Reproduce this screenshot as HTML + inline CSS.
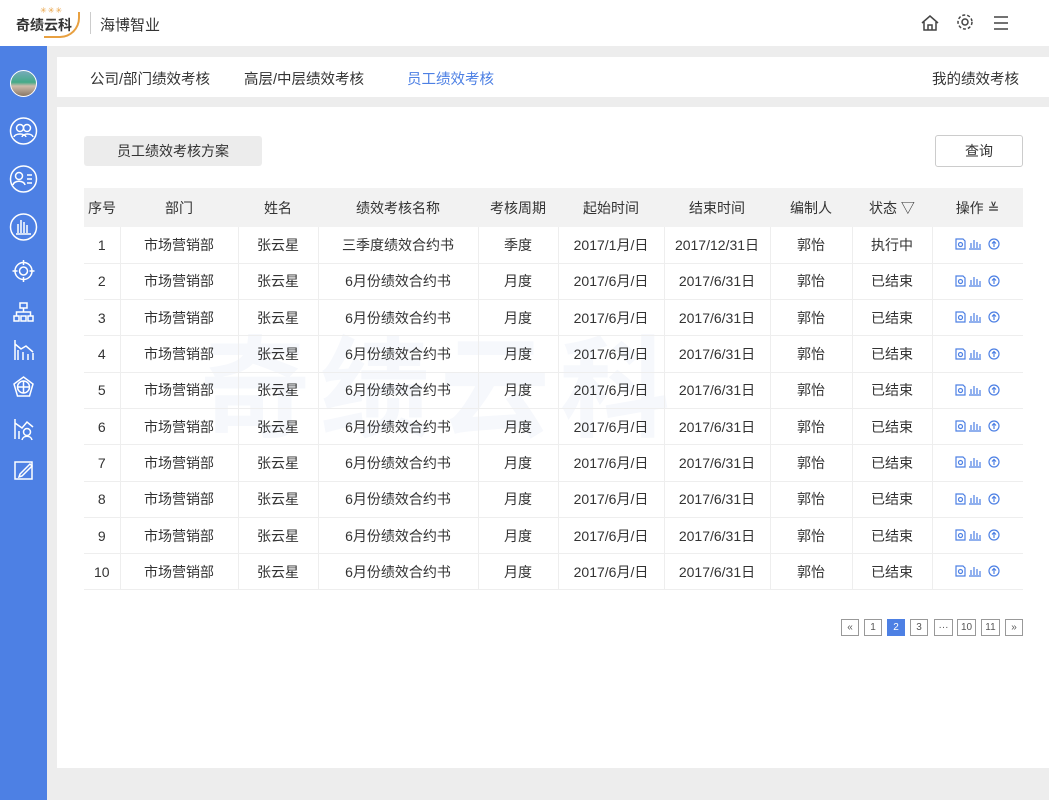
<!DOCTYPE html><html><head><meta charset="utf-8"><style>
*{margin:0;padding:0;box-sizing:border-box}
body{width:1049px;height:800px;background:#ededed;font-family:"Liberation Sans","Noto Sans CJK SC",sans-serif;color:#333;position:relative;overflow:hidden;font-size:14px}
.hd{position:absolute;left:0;top:0;width:1049px;height:46px;background:#fff}
.sb{position:absolute;left:0;top:46px;width:47px;height:754px;background:#4d80e4}
.tabs{position:absolute;left:57px;top:57px;width:992px;height:40px;background:#fff;font-size:14.5px}
.tabs span{position:absolute;top:11px}
.card{position:absolute;left:57px;top:107px;width:992px;height:661px;background:#fff}
table{position:absolute;left:84px;top:188px;width:939px;border-collapse:collapse;font-size:14px}
td,th{text-align:center;font-weight:normal;height:36.3px;border-bottom:1px solid #eee;border-left:1px solid #eee}
th{background:#f2f2f2;height:39px;border:none}
td:first-child{border-left:none}
td.ops{padding-top:3px}
.pg{position:absolute;top:619px;height:17px;border:1px solid #999;font-size:10px;color:#555;text-align:center;line-height:15px}
</style></head><body>
<svg width="0" height="0" style="position:absolute"><defs><g id="op" fill="none" stroke="#4d80e4" stroke-width="1.2"><path d="M1 1H8L10 3V11H1Z"/><circle cx="5.5" cy="6.5" r="2"/><path d="M14 11H26M16 10V5M19 10V2M22 10V4M25 10V6"/><circle cx="39" cy="6" r="5"/><path d="M39 9V3.5M37 5.5L39 3.5L41 5.5"/></g></defs></svg>
<div class="hd">
<div style="position:absolute;left:16px;top:15px;font-size:14px;font-weight:bold;color:#333">奇绩云科</div>
<div style="position:absolute;left:44px;top:12px;width:36px;height:26px;border:2px solid #e8a040;border-left:none;border-top:none;border-radius:0 0 20px 0"></div>
<div style="position:absolute;left:40px;top:6px;font-size:8px;color:#e8a040;letter-spacing:1px">✳✳✳</div>
<div style="position:absolute;left:90px;top:12px;width:1px;height:22px;background:#ccc"></div>
<div style="position:absolute;left:100px;top:14px;font-size:15px">海博智业</div>
<svg style="position:absolute;left:920px;top:14px" width="100" height="18" fill="none" stroke="#444" stroke-width="1.5"><path d="M2 9L10 2L18 9M4 8V16H16V8M8 16V11H12V16"/><circle cx="45" cy="8" r="3"/><circle cx="45" cy="8" r="7" stroke-dasharray="3 2"/><path d="M74 3H88M74 9H88M74 15H88"/></svg>
</div>
<div class="sb">
<div style="position:absolute;left:10px;top:24px;width:27px;height:27px;border:1.5px solid #fff;border-radius:50%;background:linear-gradient(#7ab 0,#4a8 45%,#cba 60%,#876 100%)"></div>
<svg style="position:absolute;left:0;top:60px" width="47" height="380" fill="none" stroke="#fff" stroke-width="1.5">
<circle cx="23.5" cy="25" r="13"/><circle cx="20" cy="22" r="3.5"/><circle cx="27" cy="22" r="3.5"/><path d="M14 31C15 27 25 27 26 31M22 31C23 27 32 27 33 31"/>
<circle cx="23.5" cy="73" r="13"/><circle cx="19" cy="70" r="3.5"/><path d="M13 79C14 74 24 74 25 79M27 69H32M27 73H32M27 77H32"/>
<circle cx="23.5" cy="121" r="13"/><path d="M16 128H31M18 127V118M21 127V114M24 127V116M27 127V119"/>
<circle cx="23.5" cy="165" r="8.5"/><circle cx="23.5" cy="165" r="4"/><path d="M23.5 154V159M23.5 171V176M12.5 165H17.5M29.5 165H34.5"/>
<rect x="20" y="197" width="7" height="5"/><rect x="14" y="210" width="5" height="5"/><rect x="21" y="210" width="5" height="5"/><rect x="28" y="210" width="5" height="5"/><path d="M23.5 202V206M16.5 210V206H30.5V210"/>
<path d="M15 234V254M18 254V244M23 254V246M28 254V248M33 254V247M15 238L21 243L26 240L33 246"/>
<path d="M23.5 271L33 278L29.5 290H17.5L14 278Z"/><circle cx="23.5" cy="281" r="6"/><path d="M23.5 275V287M18 281H29"/>
<path d="M15 313V333M19 333V325M15 317L22 322L27 316L33 321"/><circle cx="27" cy="326" r="3.5"/><path d="M22 334C23 329 31 329 32 334"/>
<rect x="15" y="356" width="17" height="17"/><path d="M20 368L30 358L32 360L22 370L19 371Z"/>
</svg>
</div>
<div class="tabs"><span style="left:33px">公司/部门绩效考核</span><span style="left:187px">高层/中层绩效考核</span><span style="left:350px;color:#4d80e4">员工绩效考核</span><span style="left:875px">我的绩效考核</span></div>
<div class="card"></div>
<div style="position:absolute;left:84px;top:136px;width:178px;height:30px;background:#ececec;border-radius:3px;text-align:center;line-height:30px;font-size:14px">员工绩效考核方案</div>
<div style="position:absolute;left:935px;top:135px;width:88px;height:32px;border:1px solid #ccc;border-radius:3px;text-align:center;line-height:30px">查询</div>
<div style="position:absolute;left:200px;top:300px;font-size:110px;color:#f6f8fc;font-weight:bold;letter-spacing:10px">奇绩云科</div>
<table>
<tr><th style="width:36px">序号</th><th style="width:118px">部门</th><th style="width:80px">姓名</th><th style="width:160px">绩效考核名称</th><th style="width:80px">考核周期</th><th style="width:106px">起始时间</th><th style="width:106px">结束时间</th><th style="width:82px">编制人</th><th style="width:80px">状态 ▽</th><th>操作 ≚</th></tr>
<tr><td>1</td><td>市场营销部</td><td>张云星</td><td>三季度绩效合约书</td><td>季度</td><td>2017/1月/日</td><td>2017/12/31日</td><td>郭怡</td><td>执行中</td><td class="ops"><svg width="46" height="13"><use href="#op"/></svg></td></tr>
<tr><td>2</td><td>市场营销部</td><td>张云星</td><td>6月份绩效合约书</td><td>月度</td><td>2017/6月/日</td><td>2017/6/31日</td><td>郭怡</td><td>已结束</td><td class="ops"><svg width="46" height="13"><use href="#op"/></svg></td></tr>
<tr><td>3</td><td>市场营销部</td><td>张云星</td><td>6月份绩效合约书</td><td>月度</td><td>2017/6月/日</td><td>2017/6/31日</td><td>郭怡</td><td>已结束</td><td class="ops"><svg width="46" height="13"><use href="#op"/></svg></td></tr>
<tr><td>4</td><td>市场营销部</td><td>张云星</td><td>6月份绩效合约书</td><td>月度</td><td>2017/6月/日</td><td>2017/6/31日</td><td>郭怡</td><td>已结束</td><td class="ops"><svg width="46" height="13"><use href="#op"/></svg></td></tr>
<tr><td>5</td><td>市场营销部</td><td>张云星</td><td>6月份绩效合约书</td><td>月度</td><td>2017/6月/日</td><td>2017/6/31日</td><td>郭怡</td><td>已结束</td><td class="ops"><svg width="46" height="13"><use href="#op"/></svg></td></tr>
<tr><td>6</td><td>市场营销部</td><td>张云星</td><td>6月份绩效合约书</td><td>月度</td><td>2017/6月/日</td><td>2017/6/31日</td><td>郭怡</td><td>已结束</td><td class="ops"><svg width="46" height="13"><use href="#op"/></svg></td></tr>
<tr><td>7</td><td>市场营销部</td><td>张云星</td><td>6月份绩效合约书</td><td>月度</td><td>2017/6月/日</td><td>2017/6/31日</td><td>郭怡</td><td>已结束</td><td class="ops"><svg width="46" height="13"><use href="#op"/></svg></td></tr>
<tr><td>8</td><td>市场营销部</td><td>张云星</td><td>6月份绩效合约书</td><td>月度</td><td>2017/6月/日</td><td>2017/6/31日</td><td>郭怡</td><td>已结束</td><td class="ops"><svg width="46" height="13"><use href="#op"/></svg></td></tr>
<tr><td>9</td><td>市场营销部</td><td>张云星</td><td>6月份绩效合约书</td><td>月度</td><td>2017/6月/日</td><td>2017/6/31日</td><td>郭怡</td><td>已结束</td><td class="ops"><svg width="46" height="13"><use href="#op"/></svg></td></tr>
<tr><td>10</td><td>市场营销部</td><td>张云星</td><td>6月份绩效合约书</td><td>月度</td><td>2017/6月/日</td><td>2017/6/31日</td><td>郭怡</td><td>已结束</td><td class="ops"><svg width="46" height="13"><use href="#op"/></svg></td></tr>
</table>
<div class="pg" style="left:841px;width:18px">«</div>
<div class="pg" style="left:864px;width:18px">1</div>
<div class="pg" style="left:887px;width:18px;background:#4d80e4;border-color:#4d80e4;color:#fff">2</div>
<div class="pg" style="left:910px;width:18px">3</div>
<div class="pg" style="left:934px;width:19px">···</div>
<div class="pg" style="left:957px;width:19px">10</div>
<div class="pg" style="left:981px;width:19px">11</div>
<div class="pg" style="left:1005px;width:18px">»</div>
</body></html>
